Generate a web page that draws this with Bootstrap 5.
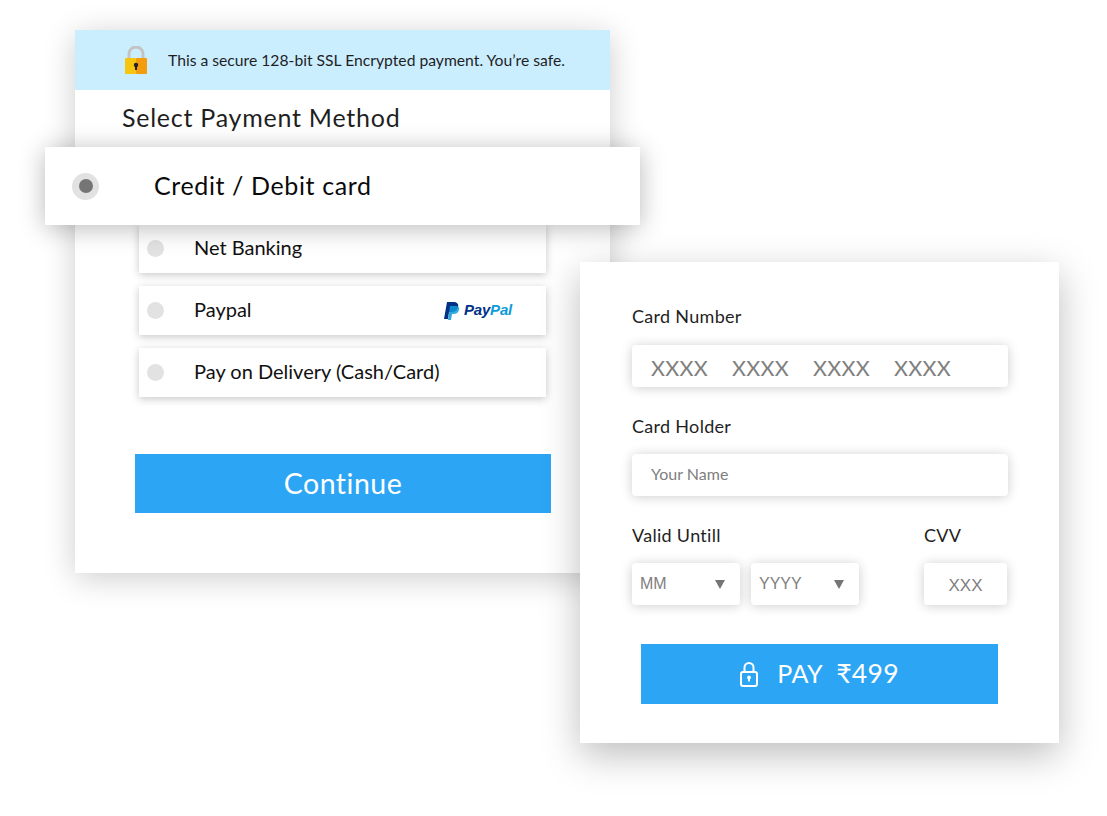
<!DOCTYPE html>
<html lang="en">
<head>
  <meta charset="UTF-8">
  <title>Payment</title>
  <link rel="stylesheet" href="https://cdn.jsdelivr.net/npm/bootstrap@5.3.3/dist/css/bootstrap.min.css">
  <style>
    body { background: #fff; font-family: "Lato", "Liberation Sans", sans-serif; color: #1f1f1f; overflow: hidden; }
    .stage { position: relative; width: 1107px; height: 816px; }
    .pay-panel { position: absolute; left: 75px; top: 30px; width: 535px; height: 543px; background: #fff; box-shadow: 0 5px 30px rgba(0,0,0,.2); }
    .secure-bar { height: 60px; background: #cbeeff; padding-left: 49px; font-size: 15.7px; }
    .secure-bar span { margin-left: 20px; margin-top: 1px; }
    .pay-title { font-size: 25px; padding: 11px 0 0 47px; line-height: 32px; letter-spacing: .75px; }
    .method-list { margin: 91px 0 0 64px; width: 407px; }
    .method-row { height: 49px; background: #fff; box-shadow: 0 2px 8px rgba(0,0,0,.22); font-size: 20px; padding: 0 34px 0 8px; color: #111; }
    .method-row + .method-row { margin-top: 13px; }
    .method-name { margin-top: -3px; }
    .radio-dot { width: 17px; height: 17px; border-radius: 50%; background: #e2e2e2; margin-right: 30px; flex-shrink: 0; }
    .paypal-mark { font-family: "Liberation Sans", sans-serif; font-weight: 700; font-style: italic; font-size: 15px; letter-spacing: -.2px; color: #003087; }
    .paypal-mark b { color: #0f9ad8; }
    .continue-btn { display: block; margin: 57px 0 0 60px; width: 416px; height: 59px; background: #2ca5f5; border: 0; border-radius: 0; color: #fff; font-size: 28.5px; letter-spacing: .5px; }
    .selected-row { position: absolute; left: 45px; top: 147px; width: 595px; height: 78px; background: #fff; box-shadow: 0 3px 26px rgba(0,0,0,.28); padding-left: 27px; font-size: 25px; letter-spacing: .62px; color: #0a0a0a; }
    .selected-radio { width: 27px; height: 27px; border-radius: 50%; background: #e2e2e2; margin-right: 55px; }
    .selected-radio i { display: block; width: 14px; height: 14px; border-radius: 50%; background: #757575; }
    .card-panel { position: absolute; left: 580px; top: 262px; width: 479px; height: 481px; background: #fff; box-shadow: 0 12px 36px rgba(0,0,0,.26); padding: 42px 52px 0; }
    .field-label { font-size: 18px; line-height: 24px; letter-spacing: .3px; margin-bottom: 16px; }
    .card-panel > .field-label:first-child { margin-bottom: 17px; }
    .field-box { height: 42px; background: #fff; border-radius: 4px; box-shadow: 0 1px 12px rgba(0,0,0,.2); color: #808080; }
    .card-number { width: 376px; padding: 4px 0 0 19px; font-size: 21.5px; margin-bottom: 27px; gap: 24px; letter-spacing: .3px; }
    .holder-name { width: 376px; padding: 0 0 2px 19px; font-size: 16px; margin-bottom: 27px; }
    .date-select { width: 108px; padding: 0 15px 0 8px; font-family: "Liberation Sans", sans-serif; font-size: 16px; }
    .date-arrow { width: 0; height: 0; border-left: 5px solid transparent; border-right: 5px solid transparent; border-top: 9px solid #757575; }
    .date-pair { gap: 11px; }
    .cvv-col { margin-left: 65px; }
    .cvv-box { width: 83px; font-family: "Liberation Sans", sans-serif; font-size: 17px; padding-top: 3px; }
    .pay-btn { margin: 39px 0 0 9px; width: 357px; height: 60px; background: #2ca5f5; border: 0; border-radius: 0; color: #fff; font-size: 25px; letter-spacing: .5px; gap: 19px; }
    .pay-text { gap: 13px; }
    .pay-amount { font-size: 26.5px; letter-spacing: .3px; }
  </style>
</head>
<body>
  <div class="stage">

    <div class="pay-panel">
      <div class="secure-bar d-flex align-items-center">
        <svg width="24" height="28" viewBox="0 0 24 28">
          <path d="M5 13V8a7 7 0 0 1 14 0v5" fill="none" stroke="#c4c4c4" stroke-width="3"/>
          <rect x="1" y="12" width="11" height="16" rx="1" fill="#f5c50f"/>
          <rect x="12" y="12" width="11" height="16" rx="1" fill="#f59c0c"/>
          <circle cx="12" cy="19" r="2.2" fill="#222"/>
          <rect x="11" y="19" width="2" height="5" fill="#222"/>
        </svg>
        <span>This a secure 128-bit SSL Encrypted payment. You’re safe.</span>
      </div>
      <div class="pay-title">Select Payment Method</div>
      <div class="method-list">
        <div class="method-row d-flex align-items-center"><div class="radio-dot"></div><span class="method-name">Net Banking</span></div>
        <div class="method-row d-flex align-items-center">
          <div class="radio-dot"></div><span class="method-name">Paypal</span>
          <div class="ms-auto d-flex align-items-center gap-1">
            <svg width="16" height="18" viewBox="0 0 16 18">
              <path d="M3 0h6c4 0 6 2 5 5s-3 5-7 5H5l-1 7H0z" fill="#003087"/>
              <path d="M6 4h5c3 0 5 1 4 4s-3 4-6 4H8l-1 6H4z" fill="#0f9ad8" opacity=".85"/>
            </svg>
            <span class="paypal-mark">Pay<b>Pal</b></span>
          </div>
        </div>
        <div class="method-row d-flex align-items-center"><div class="radio-dot"></div><span class="method-name">Pay on Delivery (Cash/Card)</span></div>
      </div>
      <button class="btn continue-btn">Continue</button>
    </div>

    <div class="selected-row d-flex align-items-center">
      <div class="selected-radio d-flex align-items-center justify-content-center"><i></i></div>
      Credit / Debit card
    </div>

    <div class="card-panel">
      <div class="field-label">Card Number</div>
      <div class="field-box card-number d-flex align-items-center"><span>XXXX</span><span>XXXX</span><span>XXXX</span><span>XXXX</span></div>
      <div class="field-label">Card Holder</div>
      <div class="field-box holder-name d-flex align-items-center">Your Name</div>
      <div class="d-flex">
        <div>
          <div class="field-label">Valid Untill</div>
          <div class="d-flex date-pair">
            <div class="field-box date-select d-flex align-items-center justify-content-between"><span>MM</span><span class="date-arrow"></span></div>
            <div class="field-box date-select d-flex align-items-center justify-content-between"><span>YYYY</span><span class="date-arrow"></span></div>
          </div>
        </div>
        <div class="cvv-col">
          <div class="field-label">CVV</div>
          <div class="field-box cvv-box d-flex align-items-center justify-content-center">XXX</div>
        </div>
      </div>
      <button class="btn pay-btn d-flex align-items-center justify-content-center">
        <svg width="18" height="25" viewBox="0 0 18 25" fill="none" stroke="#fff" stroke-width="2">
          <rect x="1" y="10" width="16" height="14" rx="2"/>
          <path d="M4.5 10V5.5a4.5 4.5 0 0 1 9 0V10"/>
          <circle cx="9" cy="15.5" r="1.9" fill="#fff" stroke="none"/>
          <rect x="8.1" y="15.5" width="1.8" height="4" fill="#fff" stroke="none"/>
        </svg>
        <span class="pay-text d-flex align-items-center"><span>PAY</span><span class="pay-amount">₹499</span></span>
      </button>
    </div>

  </div>
</body>
</html>
